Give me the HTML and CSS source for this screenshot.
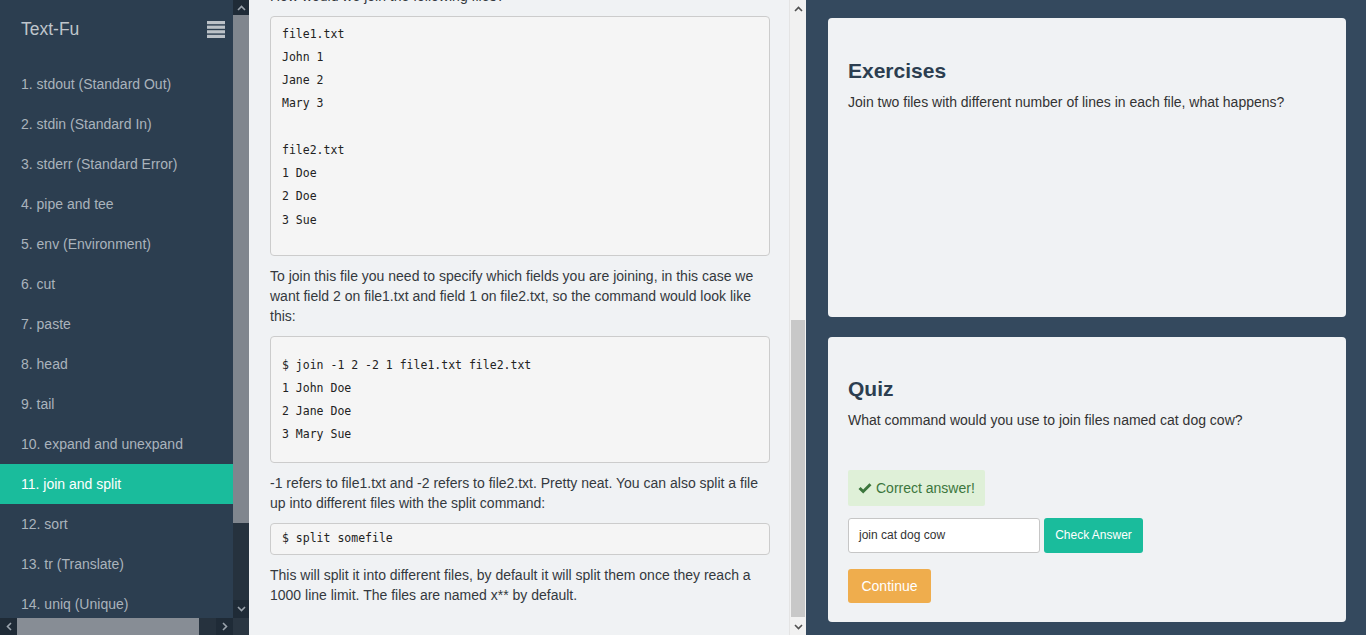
FILE: index.html
```html
<!DOCTYPE html>
<html lang="en">
<head>
<meta charset="utf-8">
<title>Text-Fu</title>
<link rel="stylesheet" href="styles.css">
</head>
<body>
<div class="app">
  <div class="side-frame">
    <div class="side-main">
      <nav class="sidebar">
        <div class="brand">
          <span class="brand-name">Text-Fu</span>
          <svg class="menu-icon" width="18" height="17" viewBox="0 0 18 17"><rect x="0" y="0" width="18" height="3.2"/><rect x="0" y="4.6" width="18" height="3.2"/><rect x="0" y="9.2" width="18" height="3.2"/><rect x="0" y="13.8" width="18" height="3.2"/></svg>
        </div>
        <ul class="menu">
          <li class="menu-item">1. stdout (Standard Out)</li>
          <li class="menu-item">2. stdin (Standard In)</li>
          <li class="menu-item">3. stderr (Standard Error)</li>
          <li class="menu-item">4. pipe and tee</li>
          <li class="menu-item">5. env (Environment)</li>
          <li class="menu-item">6. cut</li>
          <li class="menu-item">7. paste</li>
          <li class="menu-item">8. head</li>
          <li class="menu-item">9. tail</li>
          <li class="menu-item">10. expand and unexpand</li>
          <li class="menu-item active">11. join and split</li>
          <li class="menu-item">12. sort</li>
          <li class="menu-item">13. tr (Translate)</li>
          <li class="menu-item">14. uniq (Unique)</li>
        </ul>
      </nav>
      <div class="vbar dark">
        <div class="sb-btn"><svg width="9" height="6" viewBox="0 0 9 6"><polyline points="1,5 4.5,1.5 8,5"/></svg></div>
        <div class="sb-thumb dark-thumb"></div>
        <div class="sb-track"></div>
        <div class="sb-btn"><svg width="9" height="6" viewBox="0 0 9 6"><polyline points="1,1 4.5,4.5 8,1"/></svg></div>
      </div>
    </div>
    <div class="hbar">
      <div class="hb-btn"><svg width="6" height="9" viewBox="0 0 6 9"><polyline points="5,1 1.5,4.5 5,8"/></svg></div>
      <div class="hb-thumb"></div>
      <div class="hb-track"></div>
      <div class="hb-btn"><svg width="6" height="9" viewBox="0 0 6 9"><polyline points="1,1 4.5,4.5 1,8"/></svg></div>
      <div class="hb-corner"></div>
    </div>
  </div>

  <main class="content-frame">
    <div class="content">
      <div class="content-inner">
        <p>How would we join the following files?</p>
<pre class="code code-a">file1.txt
John 1
Jane 2
Mary 3

file2.txt
1 Doe
2 Doe
3 Sue</pre>
        <p>To join this file you need to specify which fields you are joining, in this case we want field 2 on file1.txt and field 1 on file2.txt, so the command would look like this:</p>
<pre class="code code-b">$ join -1 2 -2 1 file1.txt file2.txt
1 John Doe
2 Jane Doe
3 Mary Sue</pre>
        <p>-1 refers to file1.txt and -2 refers to file2.txt. Pretty neat. You can also split a file up into different files with the split command:</p>
<pre class="code code-c">$ split somefile</pre>
        <p>This will split it into different files, by default it will split them once they reach a 1000 line limit. The files are named x** by default.</p>
      </div>
    </div>
    <div class="vbar light">
      <div class="sb-btn"><svg width="9" height="6" viewBox="0 0 9 6"><polyline points="1,5 4.5,1.5 8,5"/></svg></div>
      <div class="sb-track light-track-top"></div>
      <div class="sb-thumb light-thumb"></div>
      <div class="sb-btn"><svg width="9" height="6" viewBox="0 0 9 6"><polyline points="1,1 4.5,4.5 8,1"/></svg></div>
    </div>
  </main>

  <aside class="panel">
    <section class="card card-ex">
      <h3 class="card-title">Exercises</h3>
      <p class="card-text">Join two files with different number of lines in each file, what happens?</p>
    </section>
    <section class="card card-quiz">
      <h3 class="card-title">Quiz</h3>
      <p class="card-text">What command would you use to join files named cat dog cow?</p>
      <div class="alert-ok">
        <svg class="check" width="14" height="11" viewBox="0 0 14 11"><path d="M0.5 6 L2.6 3.9 L5.2 6.4 L11.4 0.2 L13.5 2.3 L5.2 10.6 Z"/></svg>
        <span>Correct answer!</span>
      </div>
      <div class="answer-row">
        <div class="answer-input">join cat dog cow</div>
        <div class="btn btn-check">Check Answer</div>
      </div>
      <div class="btn btn-continue">Continue</div>
    </section>
  </aside>
</div>
</body>
</html>
```

FILE: styles.css
```css
html, body {
  margin: 0;
  padding: 0;
  height: 635px;
  overflow: hidden;
}
body {
  font-family: "Liberation Sans", Arial, sans-serif;
  font-size: 14px;
  color: #333;
}
.app {
  display: flex;
  height: 635px;
  width: 1366px;
}

/* ---------- sidebar ---------- */
.side-frame {
  width: 249px;
  flex: none;
  display: flex;
  flex-direction: column;
  background: #2c3e50;
}
.side-main {
  display: flex;
  height: 618px;
  overflow: hidden;
}
.sidebar {
  width: 233px;
  flex: none;
  overflow: hidden;
}
.brand {
  height: 64px;
  display: flex;
  align-items: flex-start;
  justify-content: space-between;
  padding: 0 8px 0 21px;
  box-sizing: border-box;
}
.brand-name {
  font-size: 17.5px;
  color: #bfc5cb;
  margin-top: 19px;
  line-height: 20px;
}
.menu-icon {
  margin-top: 21px;
  fill: #bcc2c8;
}
.menu {
  list-style: none;
  margin: 0;
  padding: 0;
}
.menu-item {
  height: 40px;
  line-height: 40px;
  padding-left: 21px;
  color: #aab3bc;
  font-size: 14px;
  white-space: nowrap;
}
.menu-item.active {
  background: #1abc9c;
  color: #ffffff;
}

/* scrollbars */
.vbar {
  width: 16px;
  flex: none;
  display: flex;
  flex-direction: column;
}
.vbar.light {
  width: 17px;
  background: #f1f1f1;
  border-left: 1px solid #e4e4e4;
  box-sizing: border-box;
}
.sb-btn {
  height: 17px;
  flex: none;
  display: flex;
  align-items: center;
  justify-content: center;
}
.sb-btn svg polyline, .hb-btn svg polyline {
  fill: none;
  stroke-width: 1.6;
}
.vbar.dark .sb-btn {
  background: #1f2b37;
  height: 15px;
}
.vbar.dark .sb-btn:last-child {
  height: 18px;
}
.vbar.dark svg polyline {
  stroke: #9aa3ac;
}
.vbar.light svg polyline {
  stroke: #505050;
}
.dark-thumb {
  height: 508px;
  background: #80868e;
  flex: none;
}
.sb-track {
  flex: 1;
}
.vbar.dark .sb-track {
  background: #26323e;
}
.light-track-top {
  background: #f1f1f1;
}
.light-thumb {
  height: 297px;
  flex: none;
  background: #c8c8c8;
  margin: 0 1px 1px 1px;
}

.hbar {
  height: 17px;
  display: flex;
  background: #26323e;
}
.hb-btn {
  width: 17px;
  flex: none;
  background: #1f2b37;
  display: flex;
  align-items: center;
  justify-content: center;
}
.hb-btn svg polyline {
  stroke: #9aa3ac;
}
.hb-thumb {
  width: 182px;
  flex: none;
  background: #878d95;
}
.hb-track {
  flex: 1;
}
.hb-corner {
  width: 16px;
  flex: none;
  background: #2a3642;
}

/* ---------- content ---------- */
.content-frame {
  width: 557px;
  flex: none;
  display: flex;
  background: #f0f2f4;
}
.content {
  width: 540px;
  flex: none;
  overflow: hidden;
  padding: 0 19px 0 21px;
  box-sizing: border-box;
}
.content-inner {
  margin-top: -14px;
}
.content p {
  margin: 0 0 10px;
  line-height: 20px;
  font-size: 14px;
  color: #34393e;
}
.code {
  margin: 0 0 10px;
  background: #f5f5f5;
  border: 1px solid #cccccc;
  border-radius: 4px;
  font-family: "DejaVu Sans Mono", "Liberation Mono", monospace;
  font-size: 11.5px;
  line-height: 23.25px;
  color: #222;
  padding: 0 11px;
  white-space: pre;
}
.code-a { padding-top: 5.5px; padding-bottom: 23.25px; }
.code-b { padding-top: 16.5px; padding-bottom: 15px; }
.code-c { padding-top: 3.5px; padding-bottom: 3.3px; }

/* ---------- right panel ---------- */
.panel {
  flex: 1;
  background: #34495e;
  padding: 18px 20px 0 22px;
  display: flex;
  flex-direction: column;
  gap: 20px;
}
.card {
  background: #f0f2f4;
  border-radius: 4px;
  padding: 0 20px;
  box-sizing: border-box;
}
.card-ex {
  height: 299px;
  padding-top: 41px;
}
.card-quiz {
  height: 285px;
  padding-top: 40px;
}
.card-title {
  margin: 0 0 10px;
  font-size: 21px;
  line-height: 23px;
  font-weight: bold;
  color: #2c3e50;
}
.card-text {
  margin: 0;
  line-height: 20px;
  font-size: 14px;
  color: #333;
}
.alert-ok {
  margin-top: 40px;
  display: inline-flex;
  align-items: center;
  gap: 4px;
  height: 36px;
  padding: 0 10px;
  box-sizing: border-box;
  background: #dff0d8;
  color: #3c763d;
  font-size: 14px;
  border-radius: 2px;
}
.check {
  fill: #3c763d;
}
.answer-row {
  display: flex;
  gap: 4px;
  margin-top: 12px;
}
.answer-input {
  width: 192px;
  height: 35px;
  box-sizing: border-box;
  background: #ffffff;
  border: 1px solid #c6c6c6;
  border-radius: 3px;
  padding: 0 10px;
  line-height: 33px;
  font-size: 12px;
  color: #333;
}
.btn {
  box-sizing: border-box;
  border-radius: 3px;
  color: #ffffff;
  text-align: center;
}
.btn-check {
  width: 99px;
  height: 35px;
  line-height: 35px;
  font-size: 12px;
  background: #1abc9c;
}
.btn-continue {
  margin-top: 16px;
  width: 83px;
  height: 34px;
  line-height: 34px;
  font-size: 14px;
  background: #efad4d;
}
```
